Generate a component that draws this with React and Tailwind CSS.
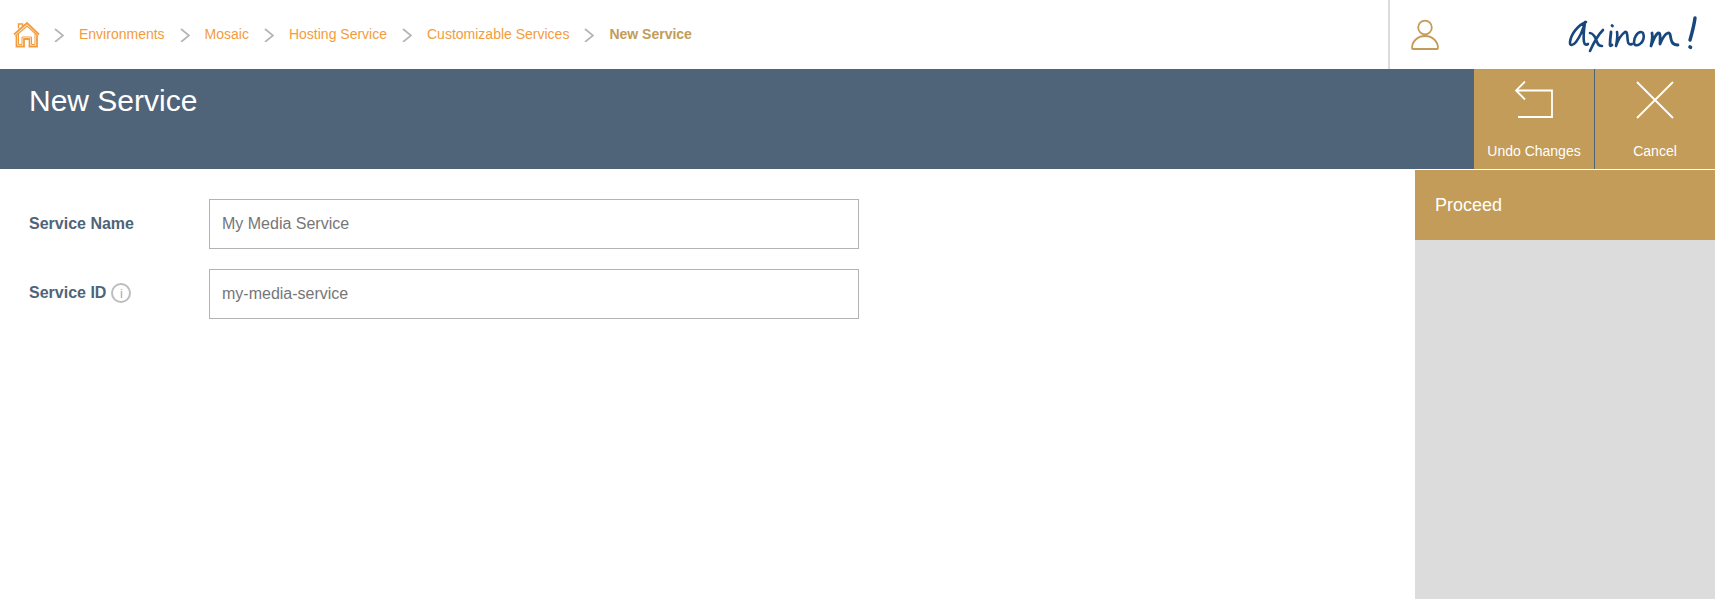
import { useState } from 'react'

const crumbs = ['Environments', 'Mosaic', 'Hosting Service', 'Customizable Services']

function Chevron() {
  return (
    <svg width="10" height="16" viewBox="0 0 10 16" fill="none" className="shrink-0">
      <path d="M1 3l8 6.500-8 6.500" stroke="#b5b5b5" strokeWidth="1.700" />
    </svg>
  )
}

function HomeIcon() {
  return (
    <svg width="27" height="28" viewBox="-1 -1 27 28" fill="none" stroke="#f39c3d" className="shrink-0 overflow-visible">
      <path d="M1 13.500L14 2l12 11.500" strokeWidth="1.800" />
      <path d="M2.500 15L14 5l11 10" strokeWidth="1.200" />
      <path d="M5.500 7.500V3h4v2.500" strokeWidth="1.500" />
      <path d="M3.500 14.500V25.500h7.500V18h5.500v7.500h7.500V14.500" strokeWidth="1.800" />
      <path d="M5.500 13V23.500h3.500V16h9.500v7.500h3.500V13" strokeWidth="1" />
    </svg>
  )
}

function UserIcon() {
  return (
    <svg width="28" height="32" viewBox="0 0 28 32" fill="none" stroke="#c29c58" strokeWidth="1.800">
      <circle cx="14" cy="8.500" r="6.800" />
      <path d="M1 29c0-6 5-12 13-12s13 6 13 12c0 .6-.2 1-1 1H2c-.8 0-1-.4-1-1z" />
    </svg>
  )
}

function Logo() {
  return (
    <svg width="140" height="39" viewBox="0 0 140 39" fill="none" stroke="#17477c" strokeLinecap="round" strokeLinejoin="round" className="shrink-0">
      <path d="M21 7C13 10 6 19 5 27c-.5 4 3 4 6 0 3-4 7-12 9-20-1 7-2 15-1 20 .5 3 3 3 4 2" strokeWidth="2.600" />
      <path d="M25 18c3 0 6 5 7 9 1 3 2 4 5 4M38 15c-4 4-9 12-13 21" strokeWidth="2.600" />
      <path d="M46 17c-.5 4-1 9-1 13 0 1 1 1 2 0M47 10.500l.5 .5" strokeWidth="2.800" />
      <path d="M52 17c1 4 0 9-1 14 2-6 6-12 9-14 3-1 2 6 3 10 .3 2 2 3 4 2" strokeWidth="2.600" />
      <path d="M76 17c-4 0-7 6-7 10 0 4 3 4 6 2 3-2 5-7 3-11-.5-1-1.500-1-2-1" strokeWidth="2.600" />
      <path d="M87 18c1 4 0 8-1 13 2-5 4-11 7-13 3-1 2 6 2 11 2-5 5-10 8-11 3-1 2 5 4 9 1 2 3 3 6 3" strokeWidth="2.800" />
      <path d="M130 3c-1 8-3 15-5 22" strokeWidth="3.400" />
      <path d="M125 32l.5 .3" strokeWidth="3.600" />
    </svg>
  )
}

function ActionButton({ label, children }) {
  return (
    <button className="w-[120px] h-[100px] bg-[#c29c58] flex flex-col items-center text-white text-sm">
      <span className="h-[60px] pt-3 flex items-start justify-center">{children}</span>
      <span className="mt-[14px] leading-4">{label}</span>
    </button>
  )
}

function Field({ label, info, value, onChange }) {
  return (
    <div className="flex items-center">
      <label className={info ? 'w-[180px] pb-[2px] flex items-center gap-[5px] text-base font-bold text-[#4f6478]' : 'w-[180px] flex items-center gap-[5px] text-base font-bold text-[#4f6478]'}>
        {label}
        {info && (
          <span className="w-5 h-5 rounded-full border-2 border-[#bdbdbd] flex items-center justify-center text-[13px] leading-none font-normal text-[#a8a8a8]">
            i
          </span>
        )}
      </label>
      <input
        value={value}
        onChange={onChange}
        className="w-[650px] h-[50px] border border-[#b3b3b3] px-3 text-base text-[#767676] outline-none"
      />
    </div>
  )
}

export default function App() {
  const [name, setName] = useState('My Media Service')
  const [id, setId] = useState('my-media-service')

  return (
    <div className="h-[599px] overflow-hidden flex flex-col bg-white font-['Liberation_Sans',Arial,sans-serif]">
      <header className="h-[69px] flex items-center shrink-0">
        <nav className="flex-1 flex items-center gap-[15px] pl-[12px] pb-[2px] text-sm text-[#f39c3d]">
          <HomeIcon />
          {crumbs.map((c) => (
            <div key={c} className="flex items-center gap-[15px]">
              <Chevron />
              <a>{c}</a>
            </div>
          ))}
          <Chevron />
          <span className="font-bold text-[#c29c58]">New Service</span>
        </nav>
        <div className="w-[327px] h-full border-l-2 border-l-[#dcdcdc] flex items-center justify-between pl-[21px] pr-[10px]">
          <UserIcon />
          <Logo />
        </div>
      </header>

      <div className="h-[100px] bg-[#4f6478] flex shrink-0">
        <h1 className="flex-1 pl-[29px] pt-[14px] text-[30px] leading-9 text-white">New Service</h1>
        <div className="flex gap-px">
          <ActionButton label="Undo Changes">
            <svg width="38" height="38" viewBox="0 0 38 38" fill="none" stroke="#fff" strokeWidth="1.800">
              <path d="M1 9.500h36V36H3M10 .5L1 9.500l9 9" />
            </svg>
          </ActionButton>
          <ActionButton label="Cancel">
            <svg width="38" height="38" viewBox="0 0 38 38" fill="none" stroke="#fff" strokeWidth="1.800">
              <path d="M1 1l36 36M37 1L1 37" />
            </svg>
          </ActionButton>
        </div>
      </div>

      <main className="flex-1 flex min-h-0">
        <div className="flex-1 flex flex-col gap-5 pl-[29px] pt-[30px]">
          <Field label="Service Name" value={name} onChange={(e) => setName(e.target.value)} />
          <Field label="Service ID" info value={id} onChange={(e) => setId(e.target.value)} />
        </div>
        <aside className="w-[300px] pt-px bg-white flex flex-col">
          <button className="h-[70px] shrink-0 bg-[#c29c58] text-white text-lg text-left pl-5">Proceed</button>
          <div className="flex-1 bg-[#dcdcdc]" />
        </aside>
      </main>
    </div>
  )
}
